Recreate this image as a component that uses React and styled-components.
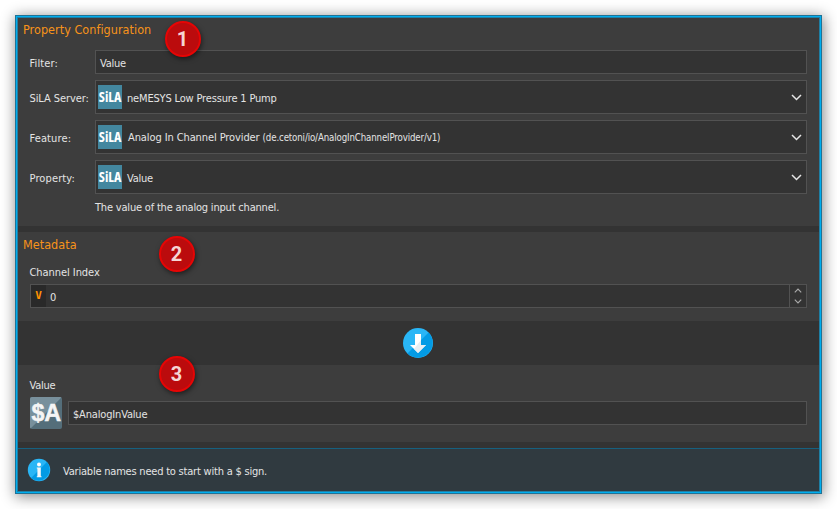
import React from 'react';
import styled, { createGlobalStyle } from 'styled-components';

const GlobalStyle = createGlobalStyle`
  html, body { margin: 0; background: #fff; overflow: hidden; }
  *, *::before, *::after { box-sizing: border-box; }
`;

const Stage = styled.div`
  width: 837px;
  height: 509px;
  padding: 15px;
  font-family: "DejaVu Sans Condensed", "DejaVu Sans", sans-serif;
  font-stretch: condensed;
  font-size: 11px;
  line-height: 16px;
  color: #e4e4e4;
`;

const Window = styled.main`
  position: relative;
  display: flex;
  flex-direction: column;
  width: 807px;
  height: 479px;
  padding: 1px;
  background: #333;
  border: 2px solid #00aeef;
  outline: 1px solid #1f7396;
  outline-offset: -1px;
  box-shadow: inset 0 0 0 1px #1f7ea3, 1px 2px 13px 1px rgba(0, 0, 0, 0.45);
`;

const Panel = styled.section`
  display: flex;
  flex-direction: column;
  height: ${p => p.$height}px;
  padding: ${p => p.$top}px 12px 0;
  margin-bottom: ${p => p.$gap || 0}px;
  background: #3d3d3d;
`;

const Label = styled.span`
  white-space: pre;
  letter-spacing: ${p => p.$track || 0}px;
`;

const Title = styled.h2`
  margin: 0 0 0 -7px;
  font-size: 12.5px;
  font-weight: 400;
  line-height: 18px;
  letter-spacing: 0.04px;
  color: #f7931a;
`;

const Form = styled.div`
  display: grid;
  grid-template-columns: 65px 1fr;
  grid-template-rows: 24px 34px 34px 34px;
  row-gap: 6px;
  align-items: center;
  margin-top: 11px;
`;

const FormLabel = styled(Label)`
  padding-top: 3px;
  margin-left: -0.5px;
`;

const GroupLabel = styled(Label)`
  margin: ${p => p.$top}px 0 0 -0.5px;
`;

const Field = styled.div`
  display: flex;
  flex: 1;
  align-items: center;
  height: ${p => p.$height || 24}px;
  padding-left: ${p => (p.$combo ? 2 : 4)}px;
  padding-right: ${p => (p.$combo ? 4 : 0)}px;
  background: #333;
  border: 1px solid #525252;
`;

const FieldText = styled(Label)`
  padding-top: 4px;
`;

const ComboText = styled.div`
  flex: 1;
  padding-top: ${p => p.$drop}px;
  padding-left: ${p => p.$indent || 5}px;
`;

const Small = styled(Label)`
  font-size: 9.6px;
`;

const Hint = styled.div`
  margin: 6px 0 0 65px;
`;

const SpinBox = styled(Field)`
  flex: none;
  padding: 0;
  margin-top: 3px;
`;

const VariableTag = styled.span`
  display: flex;
  align-items: center;
  justify-content: center;
  width: 15px;
  height: 22px;
  margin-right: 4px;
  background: #292929;
  color: #ff9100;
  font-family: "DejaVu Sans Mono", monospace;
  font-size: 11px;
  font-weight: 700;
`;

const Steppers = styled.div`
  display: flex;
  flex-direction: column;
  align-items: center;
  justify-content: space-between;
  width: 17px;
  height: 22px;
  margin-left: auto;
  padding: 3px 0;
  border-left: 1px solid #525252;
`;

const ArrowBand = styled.div`
  display: flex;
  align-items: center;
  justify-content: center;
  height: 44px;
  padding-right: 1px;
`;

const VariableRow = styled.div`
  display: flex;
  align-items: center;
  gap: 6px;
  margin-top: 3px;
`;

const InfoBar = styled.footer`
  display: flex;
  align-items: center;
  gap: 12px;
  height: 43px;
  padding: 0 0 1px 9px;
  background: #303a40;
  border-top: 1px solid #16607f;
`;

const Badge = styled.span`
  position: absolute;
  left: ${p => p.$x}px;
  top: ${p => p.$y}px;
  display: flex;
  align-items: center;
  justify-content: center;
  width: 36px;
  height: 36px;
  padding-right: 1px;
  border: 2px solid #e60505;
  border-radius: 50%;
  background: #bb0b0d;
  box-shadow: 1px 2px 5px rgba(0, 0, 0, 0.5);
  color: #f5d5d5;
  font: 700 20px/32px Roboto, sans-serif;
`;

const SiLAMark = () => (
  <svg width="24" height="24" viewBox="0 0 24 24">
    <rect width="24" height="24" fill="#43879f" />
    <text x="0.8" y="17" fontFamily="Open Sans" fontWeight="700" fontSize="14" textLength="22.4" lengthAdjust="spacingAndGlyphs" fill="#fff">SiLA</text>
  </svg>
);

const Chevron = ({ up, dim }) => (
  <svg width={dim ? 8 : 11} height={dim ? 5 : 7} viewBox="0 0 11 7">
    <path d={up ? 'M1 6 L5.5 1.5 L10 6' : 'M1 1 L5.5 5.5 L10 1'} fill="none" stroke={dim ? '#aaa' : '#e6e6e6'} strokeWidth={dim ? 1.6 : 1.5} />
  </svg>
);

const DownArrow = () => (
  <svg width="30" height="30" viewBox="0 0 30 30">
    <circle cx="15" cy="15" r="15" fill="#29b6f6" />
    <path d="M25.6 4.4A15 15 0 0 1 4.4 25.6Z" fill="#039be5" />
    <path d="M12 6H18V17H23L15 25L7 17H12Z" fill="#fff" />
    <path d="M18 12V17H23L15 25L11 21Z" fill="#e8eef2" />
  </svg>
);

const InfoIcon = () => (
  <svg width="24" height="24" viewBox="0 0 24 24">
    <circle cx="12" cy="12" r="11.2" fill="#29b6f6" />
    <path d="M19.9 4.1A11.2 11.2 0 0 1 4.1 19.9Z" fill="#039be5" />
    <circle cx="12" cy="6.5" r="2" fill="#fff" />
    <path d="M9.8 9.5H13.8V18.2H14.5V19.3H9.8V18.2H10.4V10.6H9.8Z" fill="#f4f8fa" />
  </svg>
);

const VariableIcon = () => (
  <svg width="32" height="32" viewBox="0 0 32 32">
    <rect width="32" height="32" rx="2" fill="#546e7a" />
    <path d="M2 0H30Q31 0 31.4 0.6L0.6 31.4Q0 31 0 30V2Q0 0 2 0Z" fill="#78909c" />
    <text x="1.4" y="23.9" fontFamily="Liberation Sans" fontWeight="700" fontSize="23.5" textLength="29.8" lengthAdjust="spacingAndGlyphs" fill="#f5f5f5" stroke="#f5f5f5" strokeWidth="0.5">$A</text>
  </svg>
);

const Combo = ({ children, indent, drop = 3 }) => (
  <Field $combo $height={34}>
    <SiLAMark />
    <ComboText $indent={indent} $drop={drop}>{children}</ComboText>
    <Chevron />
  </Field>
);

export default function App() {
  return (
    <Stage>
      <GlobalStyle />
      <Window>
        <Panel $height={208} $top={3} $gap={6}>
          <Title>Property Configuration</Title>
          <Form>
            <FormLabel $track={0.12}>Filter:</FormLabel>
            <Field><FieldText $track={-0.25}>Value</FieldText></Field>
            <FormLabel $track={-0.08}>SiLA Server:</FormLabel>
            <Combo><Label $track={-0.17}>neMESYS Low Pressure 1 Pump</Label></Combo>
            <FormLabel $track={0.12}>Feature:</FormLabel>
            <Combo indent={6} drop={1}>
              <Label $track={-0.1}>Analog In Channel Provider </Label>
              <Small $track={-0.12}>(de.cetoni/io/AnalogInChannelProvider/v1)</Small>
            </Combo>
            <FormLabel $track={0.12}>Property:</FormLabel>
            <Combo><Label $track={-0.25}>Value</Label></Combo>
          </Form>
          <Hint><Label $track={-0.19}>The value of the analog input channel.</Label></Hint>
        </Panel>
        <Panel $height={89} $top={4}>
          <Title>Metadata</Title>
          <GroupLabel $top={11} $track={-0.06}>Channel Index</GroupLabel>
          <SpinBox>
            <VariableTag>V</VariableTag>
            <FieldText>0</FieldText>
            <Steppers><Chevron up dim /><Chevron dim /></Steppers>
          </SpinBox>
        </Panel>
        <ArrowBand><DownArrow /></ArrowBand>
        <Panel $height={77} $top={12} $gap={6}>
          <GroupLabel $top={1} $track={-0.25}>Value</GroupLabel>
          <VariableRow>
            <VariableIcon />
            <Field><FieldText $track={-0.17}>$AnalogInValue</FieldText></Field>
          </VariableRow>
        </Panel>
        <InfoBar>
          <InfoIcon />
          <FieldText $track={-0.21}>Variable names need to start with a $ sign.</FieldText>
        </InfoBar>
        <Badge $x={148} $y={4}>1</Badge>
        <Badge $x={142} $y={219}>2</Badge>
        <Badge $x={142} $y={339}>3</Badge>
      </Window>
    </Stage>
  );
}
